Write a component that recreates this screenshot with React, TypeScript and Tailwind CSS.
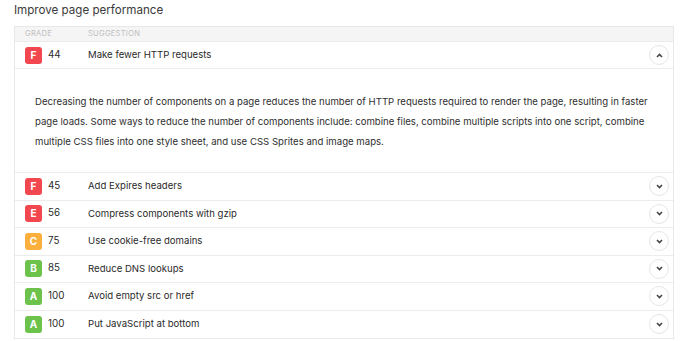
import React from "react";

type Row = { g: string; score: number; text: string; color: string; open?: boolean };

const rows: Row[] = [
  { g: "F", score: 44, text: "Make fewer HTTP requests", color: "bg-[#f2474f]", open: true },
  { g: "F", score: 45, text: "Add Expires headers", color: "bg-[#f2474f]" },
  { g: "E", score: 56, text: "Compress components with gzip", color: "bg-[#f2474f]" },
  { g: "C", score: 75, text: "Use cookie-free domains", color: "bg-[#fbaf3c]" },
  { g: "B", score: 85, text: "Reduce DNS lookups", color: "bg-[#6cc24a]" },
  { g: "A", score: 100, text: "Avoid empty src or href", color: "bg-[#6cc24a]" },
  { g: "A", score: 100, text: "Put JavaScript at bottom", color: "bg-[#6cc24a]" },
];

function Chevron({ up }: { up?: boolean }) {
  return (
    <div className="w-[20px] h-[20px] rounded-full border border-[#e6e6e6] bg-white flex items-center justify-center">
      <svg width="7" height="5" viewBox="0 0 7 5">
        {up ? (
          <polyline points="1,4 3.5,1.5 6,4" fill="none" stroke="#444" strokeWidth="1.6" />
        ) : (
          <polyline points="1,1 3.5,3.5 6,1" fill="none" stroke="#444" strokeWidth="1.6" />
        )}
      </svg>
    </div>
  );
}

export default function App() {
  return (
    <div className="w-[688px] h-[341px] bg-white px-[14px] font-['Inter',sans-serif] text-[#333]">
      <div className="h-[26px] pt-[2px] text-[11.6px] leading-[16px] text-[#3a3a3a]">Improve page performance</div>
      <div className="border border-[#e8e8e8]">
        <div className="h-[15px] bg-[#f5f5f5] border-b border-[#ececec] flex items-center pl-[10px] text-[7.5px] tracking-[0.3px] text-[#bdbdbd] uppercase">
          <div className="w-[63px]">Grade</div>
          <div>Suggestion</div>
        </div>
        {rows.map((r, i) => (
          <React.Fragment key={i}>
            <div
              className={`flex items-center pl-[10px] pr-[4px] ${i === 0 ? "h-[27px]" : "h-[27.5px]"} ${
                i === rows.length - 1 ? "" : "border-b border-[#ececec]"
              }`}
            >
              <div className="w-[63px] flex items-center">
                <div
                  className={`w-[17px] h-[17px] rounded-[3px] ${r.color} text-white font-bold text-[10px] flex items-center justify-center`}
                >
                  {r.g}
                </div>
                <div className="ml-[6px] text-[9.8px] text-[#2a2a2a]">{r.score}</div>
              </div>
              <div className="flex-1 text-[9.6px] text-[#2a2a2a]">{r.text}</div>
              <Chevron up={r.open} />
            </div>
            {r.open && (
              <div className="h-[104px] border-b border-[#ececec] pl-[20px] pr-[20px] pt-[23px] text-[9.6px] leading-[20px] text-[#2e2e2e]">
                Decreasing the number of components on a page reduces the number of HTTP requests required to render the page, resulting in faster page loads. Some ways to reduce the number of components include: combine files, combine multiple scripts into one script, combine multiple CSS files into one style sheet, and use CSS Sprites and image maps.
              </div>
            )}
          </React.Fragment>
        ))}
      </div>
    </div>
  );
}
